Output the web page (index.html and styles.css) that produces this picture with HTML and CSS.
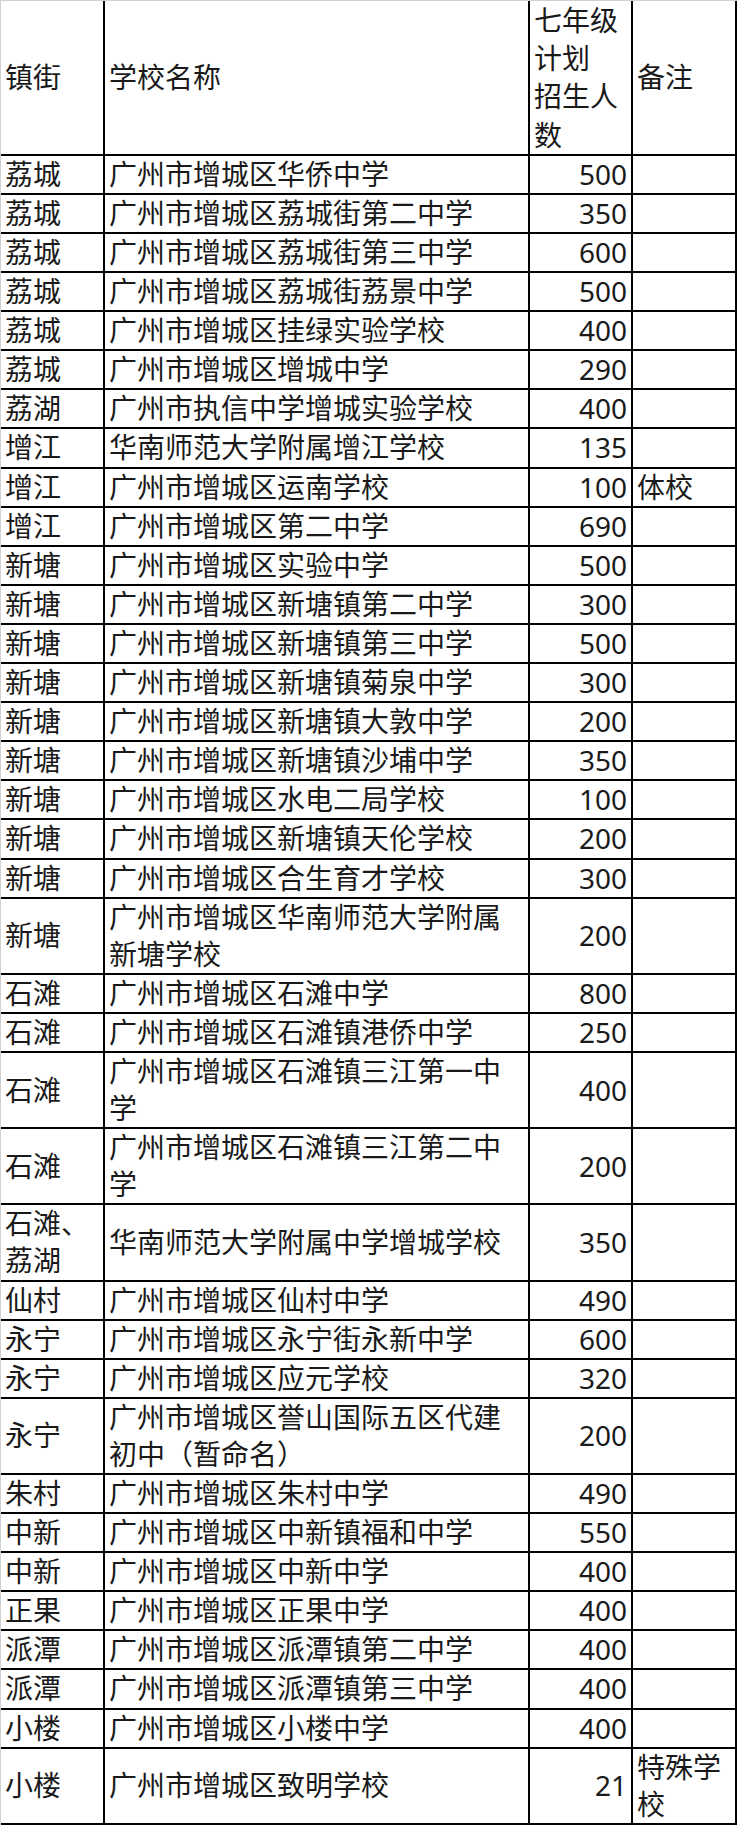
FILE: index.html
```html
<!DOCTYPE html>
<html lang="zh-CN">
<head>
<meta charset="utf-8">
<title>七年级计划招生人数</title>
<link rel="stylesheet" href="styles.css">
</head>
<body>
<table class="plan">
  <thead>
    <tr>
      <th class="c-town">镇街</th>
      <th class="c-name">学校名称</th>
      <th class="c-num">七年级<br>计划<br>招生人<br>数</th>
      <th class="c-note">备注</th>
    </tr>
  </thead>
  <tbody>
    <tr><td>荔城</td><td>广州市增城区华侨中学</td><td class="num">500</td><td></td></tr>
    <tr><td>荔城</td><td>广州市增城区荔城街第二中学</td><td class="num">350</td><td></td></tr>
    <tr><td>荔城</td><td>广州市增城区荔城街第三中学</td><td class="num">600</td><td></td></tr>
    <tr><td>荔城</td><td>广州市增城区荔城街荔景中学</td><td class="num">500</td><td></td></tr>
    <tr><td>荔城</td><td>广州市增城区挂绿实验学校</td><td class="num">400</td><td></td></tr>
    <tr><td>荔城</td><td>广州市增城区增城中学</td><td class="num">290</td><td></td></tr>
    <tr><td>荔湖</td><td>广州市执信中学增城实验学校</td><td class="num">400</td><td></td></tr>
    <tr><td>增江</td><td>华南师范大学附属增江学校</td><td class="num">135</td><td></td></tr>
    <tr><td>增江</td><td>广州市增城区运南学校</td><td class="num">100</td><td>体校</td></tr>
    <tr><td>增江</td><td>广州市增城区第二中学</td><td class="num">690</td><td></td></tr>
    <tr><td>新塘</td><td>广州市增城区实验中学</td><td class="num">500</td><td></td></tr>
    <tr><td>新塘</td><td>广州市增城区新塘镇第二中学</td><td class="num">300</td><td></td></tr>
    <tr><td>新塘</td><td>广州市增城区新塘镇第三中学</td><td class="num">500</td><td></td></tr>
    <tr><td>新塘</td><td>广州市增城区新塘镇菊泉中学</td><td class="num">300</td><td></td></tr>
    <tr><td>新塘</td><td>广州市增城区新塘镇大敦中学</td><td class="num">200</td><td></td></tr>
    <tr><td>新塘</td><td>广州市增城区新塘镇沙埔中学</td><td class="num">350</td><td></td></tr>
    <tr><td>新塘</td><td>广州市增城区水电二局学校</td><td class="num">100</td><td></td></tr>
    <tr><td>新塘</td><td>广州市增城区新塘镇天伦学校</td><td class="num">200</td><td></td></tr>
    <tr><td>新塘</td><td>广州市增城区合生育才学校</td><td class="num">300</td><td></td></tr>
    <tr><td>新塘</td><td>广州市增城区华南师范大学附属新塘学校</td><td class="num">200</td><td></td></tr>
    <tr><td>石滩</td><td>广州市增城区石滩中学</td><td class="num">800</td><td></td></tr>
    <tr><td>石滩</td><td>广州市增城区石滩镇港侨中学</td><td class="num">250</td><td></td></tr>
    <tr><td>石滩</td><td>广州市增城区石滩镇三江第一中学</td><td class="num">400</td><td></td></tr>
    <tr><td>石滩</td><td>广州市增城区石滩镇三江第二中学</td><td class="num">200</td><td></td></tr>
    <tr><td>石滩、荔湖</td><td>华南师范大学附属中学增城学校</td><td class="num">350</td><td></td></tr>
    <tr><td>仙村</td><td>广州市增城区仙村中学</td><td class="num">490</td><td></td></tr>
    <tr><td>永宁</td><td>广州市增城区永宁街永新中学</td><td class="num">600</td><td></td></tr>
    <tr><td>永宁</td><td>广州市增城区应元学校</td><td class="num">320</td><td></td></tr>
    <tr><td>永宁</td><td>广州市增城区誉山国际五区代建初中（暂命名）</td><td class="num">200</td><td></td></tr>
    <tr><td>朱村</td><td>广州市增城区朱村中学</td><td class="num">490</td><td></td></tr>
    <tr><td>中新</td><td>广州市增城区中新镇福和中学</td><td class="num">550</td><td></td></tr>
    <tr><td>中新</td><td>广州市增城区中新中学</td><td class="num">400</td><td></td></tr>
    <tr><td>正果</td><td>广州市增城区正果中学</td><td class="num">400</td><td></td></tr>
    <tr><td>派潭</td><td>广州市增城区派潭镇第二中学</td><td class="num">400</td><td></td></tr>
    <tr><td>派潭</td><td>广州市增城区派潭镇第三中学</td><td class="num">400</td><td></td></tr>
    <tr><td>小楼</td><td>广州市增城区小楼中学</td><td class="num">400</td><td></td></tr>
    <tr><td>小楼</td><td>广州市增城区致明学校</td><td class="num">21</td><td>特殊学校</td></tr>
  </tbody>
</table>
</body>
</html>
```

FILE: styles.css
```css
html, body {
  margin: 0;
  padding: 0;
  background: #ffffff;
}

.plan {
  border-collapse: separate;
  border-spacing: 0;
  border-left: 1px solid #d0d0d0;
  border-top: 1px solid #d0d0d0;
  font-family: "Noto Sans", "Noto Sans CJK SC", sans-serif;
  font-size: 28px;
  color: #1a1a1a;
}

.plan th,
.plan td {
  border-right: 2px solid #000;
  border-bottom: 2px solid #000;
  padding: 0 4px;
  vertical-align: middle;
  text-align: left;
  font-weight: normal;
  line-height: 37.1px;
  word-break: break-all;
}

.plan th {
  line-height: 38.2px;
}

.c-town { width: 94px; }
.c-name { width: 415px; }
.c-num  { width: 93px; }
.c-note { width: 94px; }

.plan td.num {
  text-align: right;
}
```
